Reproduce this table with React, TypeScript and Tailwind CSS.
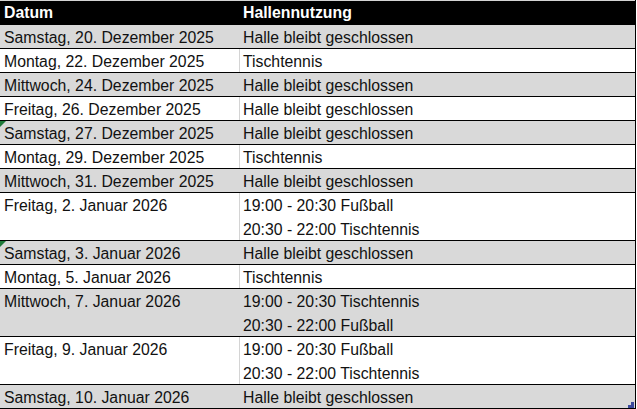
import React from "react";

type Row = { date: string; lines: string[]; gray: boolean; mark?: boolean };

const rows: Row[] = [
  { date: "Samstag, 20. Dezember 2025", lines: ["Halle bleibt geschlossen"], gray: true },
  { date: "Montag, 22. Dezember 2025", lines: ["Tischtennis"], gray: false },
  { date: "Mittwoch, 24. Dezember 2025", lines: ["Halle bleibt geschlossen"], gray: true },
  { date: "Freitag, 26. Dezember 2025", lines: ["Halle bleibt geschlossen"], gray: false },
  { date: "Samstag, 27. Dezember 2025", lines: ["Halle bleibt geschlossen"], gray: true, mark: true },
  { date: "Montag, 29. Dezember 2025", lines: ["Tischtennis"], gray: false },
  { date: "Mittwoch, 31. Dezember 2025", lines: ["Halle bleibt geschlossen"], gray: true },
  { date: "Freitag, 2. Januar 2026", lines: ["19:00 - 20:30 Fußball", "20:30 - 22:00 Tischtennis"], gray: false },
  { date: "Samstag, 3. Januar 2026", lines: ["Halle bleibt geschlossen"], gray: true, mark: true },
  { date: "Montag, 5. Januar 2026", lines: ["Tischtennis"], gray: false },
  { date: "Mittwoch, 7. Januar 2026", lines: ["19:00 - 20:30 Tischtennis", "20:30 - 22:00 Fußball"], gray: true },
  { date: "Freitag, 9. Januar 2026", lines: ["19:00 - 20:30 Fußball", "20:30 - 22:00 Tischtennis"], gray: false },
  { date: "Samstag, 10. Januar 2026", lines: ["Halle bleibt geschlossen"], gray: true },
];

export default function App() {
  return (
    <div
      className="w-[637px] h-[409px] bg-white overflow-hidden text-[#111]"
      style={{ fontFamily: '"Liberation Sans", Arial, sans-serif' }}
    >
      <div className="relative w-[636px] border-r border-black">
        <div className="border-t border-[#d4d4d4]">
          <div className="flex h-[24px] bg-black text-white font-bold text-[15.8px] leading-[24px]">
            <div className="w-[240px] pl-[4px]">Datum</div>
            <div className="flex-1 pl-[3px]">Hallennutzung</div>
          </div>
        </div>
        {rows.map((r, i) => (
          <div
            key={i}
            className={`flex border-b border-black text-[15.8px] leading-[24px] ${r.gray ? "bg-[#d9d9d9]" : "bg-white"}`}
          >
            <div
              className={`relative w-[240px] pl-[4px] border-r ${r.gray ? "border-[#d9d9d9]" : "border-[#d4d4d4]"}`}
            >
              {r.mark && (
                <div className="absolute top-0 left-0 w-0 h-0 border-t-[6px] border-t-[#1f7a3a] border-r-[6px] border-r-transparent" />
              )}
              <div className="h-[23px] leading-[23px] pt-[1px] whitespace-nowrap">{r.date}</div>
            </div>
            <div className="flex-1 pl-[3px]">
              {r.lines.map((l, j) => (
                <div
                  key={j}
                  className={`${j === r.lines.length - 1 ? "h-[23px] leading-[23px]" : "h-[24px] leading-[24px]"} pt-[1px] whitespace-nowrap`}
                >
                  {l}
                </div>
              ))}
            </div>
          </div>
        ))}
        <svg className="absolute right-[1px] bottom-[1px]" width="6" height="6" viewBox="0 0 6 6">
          <polygon points="6,0 6,6 0,6 0,3 3,3 3,0" fill="#3b4a9c" />
        </svg>
      </div>
    </div>
  );
}
